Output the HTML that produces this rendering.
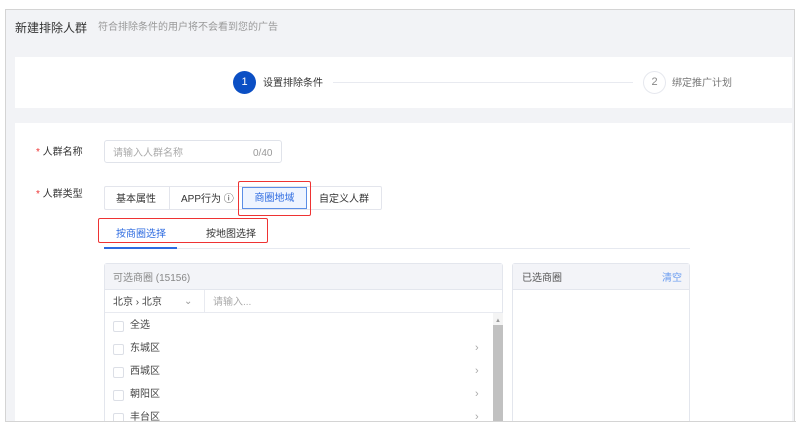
<!DOCTYPE html>
<html><head><meta charset="utf-8"><style>
*{margin:0;padding:0;box-sizing:border-box}
body{width:800px;height:428px;background:#fff;position:relative;overflow:hidden;font-family:"Liberation Sans","Noto Sans CJK SC",sans-serif;font-size:10px;color:#333;line-height:14px}
.a{position:absolute}
.frame{left:5px;top:9px;width:790px;height:413px;border:1px solid #d4d4d4;background:#f2f3f6;overflow:hidden}
.chk{position:absolute;left:113px;width:11px;height:11px;border:1px solid #dcdfe6;border-radius:2px;background:#fff}
.it{position:absolute;left:130px;font-size:10px;color:#444}
.arr{position:absolute;left:475px;color:#aaa;font-size:11px}
</style></head><body>
<div class="a frame"></div>
<div class="a" style="left:15px;top:20px;font-size:12px;color:#333;line-height:16px">新建排除人群</div>
<div class="a" style="left:98px;top:21px;font-size:10px;color:#999">符合排除条件的用户将不会看到您的广告</div>
<div class="a" style="left:15px;top:57px;width:777px;height:51px;background:#fff"></div>
<div class="a" style="left:233px;top:71px;width:23px;height:23px;border-radius:50%;background:#0b4fc4;color:#fff;text-align:center;line-height:23px;font-size:11px">1</div>
<div class="a" style="left:263px;top:77px;font-size:10px;color:#333">设置排除条件</div>
<div class="a" style="left:333px;top:82px;width:300px;height:1px;background:#e8eaf0"></div>
<div class="a" style="left:643px;top:71px;width:23px;height:23px;border-radius:50%;border:1px solid #e6e8ee;color:#888;text-align:center;line-height:21px;font-size:11px">2</div>
<div class="a" style="left:672px;top:77px;font-size:10px;color:#777">绑定推广计划</div>
<div class="a" style="left:15px;top:123px;width:777px;height:298px;background:#fff"></div>
<div class="a" style="left:36px;top:146px;font-size:10px;color:#333"><span style="color:#e33">*</span> 人群名称</div>
<div class="a" style="left:104px;top:140px;width:178px;height:23px;border:1px solid #e0e3ea;border-radius:3px"></div>
<div class="a" style="left:113px;top:147px;color:#aaa">请输入人群名称</div>
<div class="a" style="left:253px;top:147px;color:#999">0/40</div>
<div class="a" style="left:36px;top:188px;font-size:10px;color:#333"><span style="color:#e33">*</span> 人群类型</div>
<div class="a" style="left:104px;top:186px;width:278px;height:24px;border:1px solid #e3e5ec;border-radius:2px"></div>
<div class="a" style="left:169px;top:186px;width:1px;height:24px;background:#e3e5ec"></div>
<div class="a" style="left:116px;top:193px">基本属性</div>
<div class="a" style="left:181px;top:193px">APP行为 ⓘ</div>
<div class="a" style="left:242px;top:187px;width:65px;height:22px;border:1px solid #5b8ee6;background:#eef4ff;color:#2d6be0;text-align:center;line-height:22px">商圈地域</div>
<div class="a" style="left:238px;top:181px;width:73px;height:35px;border:1.5px solid #e33;border-radius:2px"></div>
<div class="a" style="left:319px;top:193px">自定义人群</div>
<div class="a" style="left:116px;top:228px;color:#2d6be0">按商圈选择</div>
<div class="a" style="left:206px;top:228px;color:#333">按地图选择</div>
<div class="a" style="left:98px;top:218px;width:170px;height:25px;border:1.5px solid #e33;border-radius:2px"></div>
<div class="a" style="left:104px;top:248px;width:586px;height:1px;background:#e6e9f0"></div>
<div class="a" style="left:104px;top:247px;width:73px;height:2px;background:#2d6be0"></div>
<div class="a" style="left:104px;top:263px;width:399px;height:165px;border:1px solid #e3e6ed;border-radius:3px"></div>
<div class="a" style="left:105px;top:264px;width:397px;height:26px;background:#f3f4f8;border-bottom:1px solid #e3e6ed"></div>
<div class="a" style="left:113px;top:272px;color:#888">可选商圈 (15156)</div>
<div class="a" style="left:105px;top:312px;width:397px;height:1px;background:#e8eaf0"></div>
<div class="a" style="left:204px;top:290px;width:1px;height:22px;background:#e8eaf0"></div>
<div class="a" style="left:113px;top:296px;color:#444">北京 › 北京</div>
<div class="a" style="left:184px;top:295px;color:#999;font-size:10px">⌄</div>
<div class="a" style="left:213px;top:296px;color:#aaa">请输入...</div>
<div class="a" style="left:493px;top:313px;width:10px;height:115px;background:#f4f4f4"></div>
<div class="a" style="left:493px;top:325px;width:10px;height:103px;background:#c1c1c1"></div>
<div class="a" style="left:495px;top:314px;font-size:6px;color:#999">▲</div>
<div class="chk" style="top:321px"></div><div class="it" style="top:319px">全选</div>
<div class="chk" style="top:344px"></div><div class="it" style="top:342px">东城区</div><div class="arr" style="top:341px">›</div>
<div class="chk" style="top:367px"></div><div class="it" style="top:365px">西城区</div><div class="arr" style="top:364px">›</div>
<div class="chk" style="top:390px"></div><div class="it" style="top:388px">朝阳区</div><div class="arr" style="top:387px">›</div>
<div class="chk" style="top:413px"></div><div class="it" style="top:411px">丰台区</div><div class="arr" style="top:410px">›</div>
<div class="a" style="left:512px;top:263px;width:178px;height:165px;border:1px solid #e3e6ed;border-radius:3px"></div>
<div class="a" style="left:513px;top:264px;width:176px;height:26px;background:#f3f4f8;border-bottom:1px solid #e3e6ed"></div>
<div class="a" style="left:522px;top:272px;color:#555">已选商圈</div>
<div class="a" style="left:662px;top:272px;color:#6a9cf0">清空</div>
<div class="a" style="left:0;top:421px;width:800px;height:7px;background:#fff"></div>
<div class="a" style="left:5px;top:421px;width:791px;height:1px;background:#d4d4d4"></div>
</body></html>
